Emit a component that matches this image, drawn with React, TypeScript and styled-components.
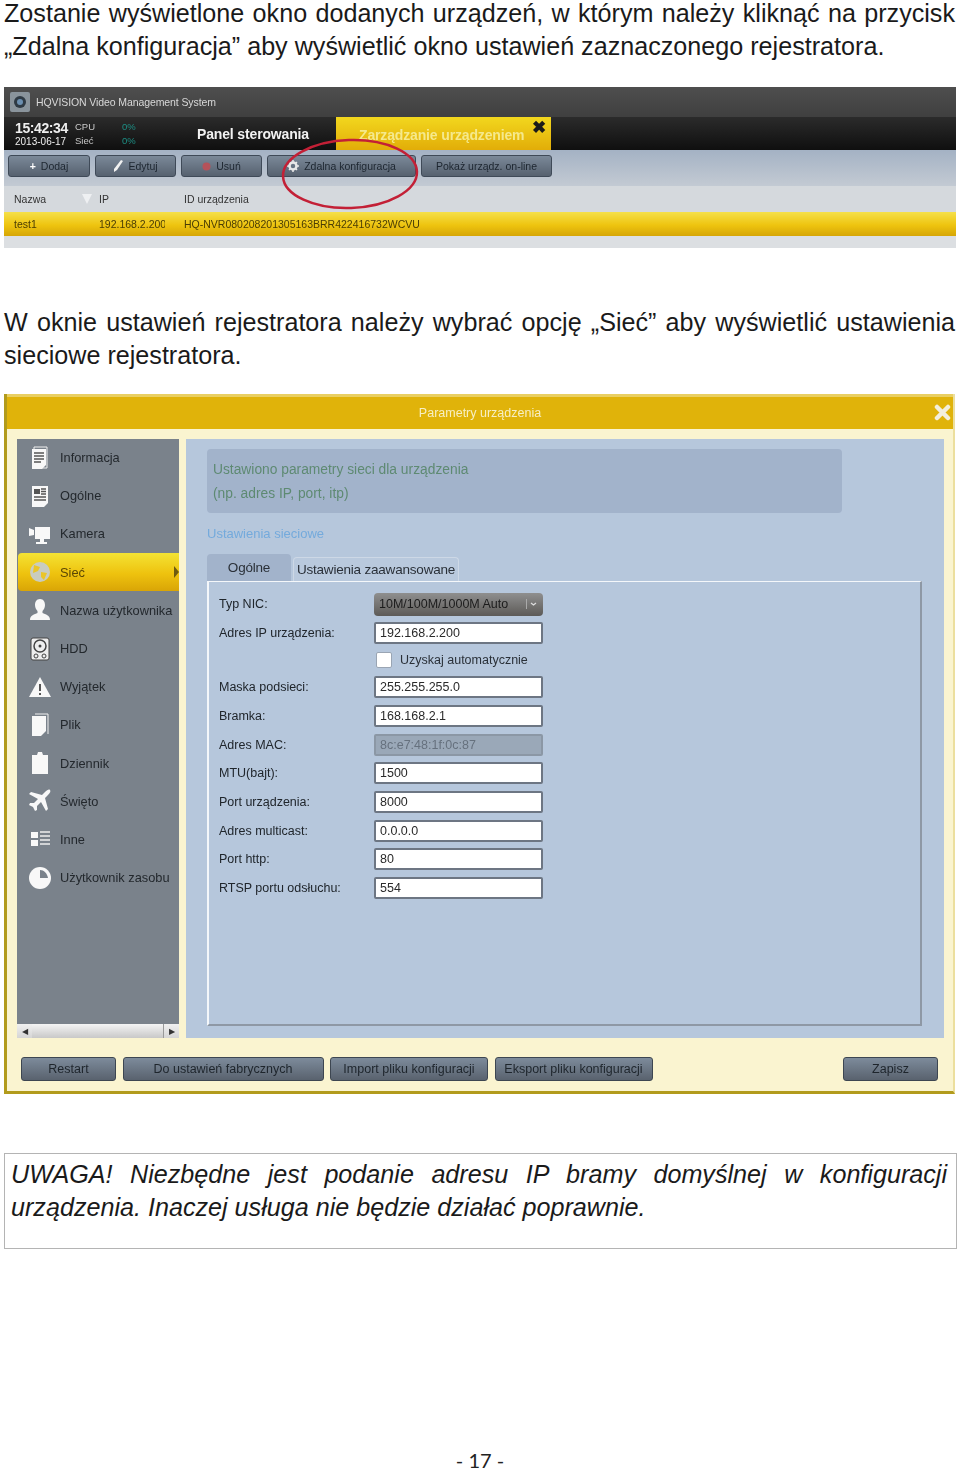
import styled, { createGlobalStyle } from 'styled-components';
import { ReactNode } from 'react';

const GlobalStyle = createGlobalStyle`
    html, body {
        margin: 0;
        padding: 0;
        background: #fff;
    }
    body {
        font-family: "Liberation Sans", Arial, sans-serif;
        color: #111;
    }
`;

const Page = styled.div`
    width: 960px;
    height: 1471px;
    overflow: hidden;
    padding: 0 4px;
    box-sizing: border-box;
`;

const Para = styled.p<{ $top: number }>`
    margin: ${p => p.$top}px 0 0;
    width: 951px;
    font-size: 25.15px;
    line-height: 33px;
    text-align: justify;
    color: #1a1a1a;
`;

/* ---------- device list screenshot ---------- */

const Shot = styled.div<{ $top: number; $height: number }>`
    position: relative;
    margin-top: ${p => p.$top}px;
    height: ${p => p.$height}px;
    filter: blur(0.35px);
    font-family: "Liberation Sans", Arial, sans-serif;
`;

const ListShot = styled(Shot)`
    width: 952px;
    display: flex;
    flex-direction: column;
    background: #dcdfe2;
`;

const TitleBar = styled.div`
    height: 30px;
    flex: none;
    display: flex;
    align-items: center;
    gap: 3px;
    padding-left: 4px;
    background: linear-gradient(#4e4e4e, #3f3f3f);
    color: #d8d8d8;
    font-size: 10.5px;
    letter-spacing: -0.1px;
`;

const NavBar = styled.div`
    height: 33px;
    flex: none;
    display: flex;
    align-items: stretch;
    background: linear-gradient(#2b2b2b, #0f0f0f);
    padding-left: 11px;
`;

const Clock = styled.div`
    width: 60px;
    display: flex;
    flex-direction: column;
    justify-content: center;
    color: #eee;
    font-size: 10px;
    b {
        font-size: 14px;
        line-height: 15px;
        letter-spacing: -0.4px;
    }
`;

const Stats = styled.div`
    width: 47px;
    display: flex;
    flex-direction: column;
    justify-content: center;
    color: #c8c8c8;
    font-size: 9.5px;
    line-height: 14px;
`;

const StatValues = styled(Stats)`
    width: 75px;
    color: #1d8f85;
`;

const NavTab = styled.div<{ $active?: boolean }>`
    display: flex;
    align-items: center;
    width: ${p => (p.$active ? '215px' : '139px')};
    padding-left: ${p => (p.$active ? '23px' : '0')};
    padding-top: ${p => (p.$active ? '3px' : '0')};
    box-sizing: border-box;
    position: relative;
    font-weight: bold;
    font-size: 14px;
    letter-spacing: -0.15px;
    color: ${p => (p.$active ? '#f5e98c' : '#f2f2f2')};
    background: ${p => (p.$active ? 'linear-gradient(#f2d71e, #e2ad08)' : 'none')};
`;

const TabClose = styled.span`
    position: absolute;
    right: 5px;
    top: 2px;
    color: #1a1a1a;
    font-size: 17px;
    line-height: 17px;
`;

const Toolbar = styled.div`
    height: 36px;
    flex: none;
    box-sizing: border-box;
    display: flex;
    gap: 5px;
    padding: 5px 0 0 4px;
    background: linear-gradient(#a4b2c4, #c3cad3);
`;

const ToolButton = styled.div<{ $width: number }>`
    width: ${p => p.$width}px;
    height: 22px;
    display: flex;
    align-items: center;
    justify-content: center;
    gap: 5px;
    box-sizing: border-box;
    border-radius: 3px;
    border: 1px solid #3f4a58;
    background: linear-gradient(#7b8999, #56616f);
    color: #1d2630;
    font-size: 10.5px;
`;

const TableHead = styled.div`
    height: 26px;
    flex: none;
    display: flex;
    align-items: center;
    background: #d5d9dd;
    color: #333;
    font-size: 10.5px;
`;

const TableRow = styled.div`
    height: 24px;
    flex: none;
    display: flex;
    align-items: center;
    background: linear-gradient(#f5e04a, #eec40f 55%, #d6a606);
    color: #4a3d05;
    font-size: 10.5px;
`;

const Cell = styled.div<{ $width: number; $inset?: number; $after?: number }>`
    width: ${p => p.$width}px;
    padding-left: ${p => p.$inset ?? 0}px;
    margin-right: ${p => p.$after ?? 0}px;
    box-sizing: border-box;
    white-space: nowrap;
    overflow: hidden;
    flex: none;
    position: relative;
`;

const SortMark = styled.span`
    position: absolute;
    right: 7px;
    top: 1px;
    width: 0;
    height: 0;
    border-left: 5px solid transparent;
    border-right: 5px solid transparent;
    border-top: 10px solid #eef0f2;
`;

const Marker = styled.svg`
    position: absolute;
    left: 273px;
    top: 48px;
    width: 146px;
    height: 78px;
`;

/* ---------- settings window screenshot ---------- */

const SettingsShot = styled(Shot)`
    width: 951px;
    box-sizing: border-box;
    display: flex;
    flex-direction: column;
    background: #faf4d0;
    border-left: 3px solid #b29b1c;
    border-right: 2px solid #ecdf9e;
    border-bottom: 3px solid #b29b1c;
`;

const WindowTitle = styled.div`
    height: 35px;
    flex: none;
    position: relative;
    display: flex;
    align-items: center;
    justify-content: center;
    background: #e0b30a;
    border-top: 3px solid #e9cf63;
    box-sizing: border-box;
    color: #f7efc4;
    font-size: 12.500px;
`;

const WindowClose = styled.svg`
    position: absolute;
    right: 2px;
    top: 7px;
    width: 17px;
    height: 17px;
`;

const WindowBody = styled.div`
    height: 599px;
    flex: none;
    margin-top: 10px;
    display: flex;
    gap: 7px;
    padding-left: 10px;
`;

const Sidebar = styled.div`
    width: 162px;
    flex: none;
    display: flex;
    flex-direction: column;
    background: #7a828b;
`;

const SideList = styled.div`
    flex: 1;
    margin-top: -0.5px;
`;

const SideItem = styled.div<{ $active?: boolean }>`
    height: 38.2px;
    display: flex;
    align-items: center;
    gap: 8px;
    padding-left: 11px;
    box-sizing: border-box;
    position: relative;
    color: ${p => (p.$active ? '#5a4605' : '#23282d')};
    font-size: 12.8px;
    white-space: nowrap;
    ${p => p.$active && `
        background: linear-gradient(#f4e334, #eec20e 55%, #d9a506);
        border-radius: 4px 0 0 4px;
        margin-left: 1px;
        padding-left: 10px;
    `}
`;

const SideArrow = styled.span`
    position: absolute;
    right: 0;
    top: 13px;
    width: 0;
    height: 0;
    border-top: 6px solid transparent;
    border-bottom: 6px solid transparent;
    border-left: 5px solid #6e5a10;
`;

const Scroll = styled.div`
    height: 14px;
    flex: none;
    display: flex;
    background: linear-gradient(#e8e8e8, #bcbcbc);
`;

const ScrollEnd = styled.div`
    width: 15px;
    display: flex;
    align-items: center;
    justify-content: center;
    background: linear-gradient(#f0f0f0, #d5d5d5);
    color: #333;
    font-size: 8px;
`;

const ScrollThumb = styled.div`
    flex: 1;
    background: linear-gradient(#f4f4f4, #c8c8c8);
    border-right: 1px solid #999;
`;

const Content = styled.div`
    width: 758px;
    flex: none;
    box-sizing: border-box;
    padding: 10px 23px 12px 21px;
    display: flex;
    flex-direction: column;
    background: #b6c7dc;
`;

const InfoBox = styled.div`
    width: 635px;
    height: 64px;
    flex: none;
    box-sizing: border-box;
    padding: 9px 6px;
    border-radius: 4px;
    background: #a2b3cb;
    color: #5e8a72;
    font-size: 13.8px;
    line-height: 24px;
`;

const SectionTitle = styled.div`
    margin-top: 13px;
    height: 16px;
    flex: none;
    color: #74aadc;
    font-size: 13px;
    line-height: 16px;
`;

const Tabs = styled.div`
    margin-top: 12px;
    height: 27px;
    flex: none;
    display: flex;
    align-items: flex-end;
    gap: 2px;
`;

const Tab = styled.div<{ $active?: boolean; $width: number }>`
    width: ${p => p.$width}px;
    height: ${p => (p.$active ? 27 : 24)}px;
    box-sizing: border-box;
    display: flex;
    align-items: center;
    justify-content: center;
    border-radius: 4px 4px 0 0;
    background: ${p => (p.$active ? '#a2b3cb' : '#b9c9dd')};
    border: ${p => (p.$active ? 'none' : '1px solid #cdd8e6')};
    border-bottom: none;
    color: #2a3038;
    font-size: 13.500px;
    letter-spacing: -0.2px;
    white-space: nowrap;
`;

const FormPanel = styled.div`
    flex: none;
    width: 715px;
    height: 445px;
    box-sizing: border-box;
    border-top: 1px solid #f4f7fa;
    border-left: 2px solid #f4f7fa;
    border-right: 2px solid #8e98a5;
    border-bottom: 2px solid #8e98a5;
    padding: 8px 0 0 10px;
    display: flex;
    flex-direction: column;
`;

const FormRow = styled.div<{ $height?: number }>`
    height: ${p => p.$height ?? 28.7}px;
    flex: none;
    display: grid;
    grid-template-columns: 155px 169px;
    align-items: center;
`;

const FieldLabel = styled.div`
    color: #20262c;
    font-size: 12.5px;
    white-space: nowrap;
`;

const TextField = styled.div<{ $disabled?: boolean }>`
    height: 22px;
    box-sizing: border-box;
    display: flex;
    align-items: center;
    padding-left: 4px;
    border-radius: 2px;
    border: 2px solid ${p => (p.$disabled ? '#8b97a5' : '#6d7683')};
    background: ${p => (p.$disabled ? '#9aa8b8' : '#fff')};
    color: ${p => (p.$disabled ? '#66717e' : '#2a2a2a')};
    font-size: 12.5px;
`;

const SelectField = styled.div`
    height: 23px;
    box-sizing: border-box;
    display: flex;
    align-items: center;
    justify-content: space-between;
    padding: 0 5px;
    border-radius: 4px;
    background: linear-gradient(#8f8f8f, #5c5a57);
    color: #1c1c1c;
    font-size: 12.5px;
    svg {
        flex: none;
    }
`;

const CheckLine = styled.div`
    grid-column: 2;
    display: flex;
    align-items: center;
    gap: 8px;
    padding-left: 2px;
    color: #2a3038;
    font-size: 12.5px;
    white-space: nowrap;
`;

const CheckBox = styled.span`
    width: 16px;
    height: 16px;
    border-radius: 2px;
    background: #fff;
    border: 1px solid #9aa5b3;
    box-sizing: border-box;
`;

const ActionBar = styled.div`
    margin-top: 19px;
    display: flex;
    gap: 6.5px;
    padding-left: 14px;
`;

const ActionButton = styled.div<{ $width: number; $push?: number }>`
    width: ${p => p.$width}px;
    margin-left: ${p => p.$push ?? 0}px;
    height: 24px;
    box-sizing: border-box;
    display: flex;
    align-items: center;
    justify-content: center;
    border-radius: 3px;
    border: 1px solid #3d4651;
    background: linear-gradient(#7d8b9b, #59626e);
    color: #1e252c;
    font-size: 12.5px;
    white-space: nowrap;
`;

/* ---------- note + footer ---------- */

const NoteBox = styled.div`
    margin-top: 59px;
    width: 953px;
    height: 96px;
    box-sizing: border-box;
    border: 1px solid #b4b4b4;
    padding: 4px 9px 0 6px;
    font-size: 25.15px;
    line-height: 33px;
    font-style: italic;
    text-align: justify;
    color: #1a1a1a;
`;

const PageNumber = styled.div`
    margin-top: 199px;
    text-align: center;
    font-family: Lato, "Liberation Sans", sans-serif;
    font-size: 20px;
    line-height: 24px;
    color: #222;
`;

/* ---------- icons ---------- */

const SvgBox = ({ children, size = 24 }: { children: ReactNode; size?: number }) => (
    <svg width={size} height={size} viewBox="0 0 24 24" fill="#f8f8f8" style={{ flex: 'none' }}>{children}</svg>
);

const sideIcons: Record<string, ReactNode> = {
    doc: <><path d="M6 1h13v21H6z" fill="none" stroke="#f0f0f0" /><path d="M4 3h14v16l-4 4H4z" /><path d="M6 7h10M6 10h10M6 13h10M6 16h7" stroke="#555" strokeWidth="1.3" /></>,
    general: <><path d="M4 2h16v17l-4 4H4z" /><path d="M6 5h6v5H6z" fill="#555" /><path d="M13 5h5M13 7.5h5M13 10h5M6 13h12M6 16h12" stroke="#555" strokeWidth="1.3" /></>,
    camera: <><path d="M7 5h15v12h-6v3h3v2H8v-2h4v-3H7z" /><path d="M1 6l5 2v5l-5 1z" /></>,
    net: <><circle cx="12" cy="12" r="10" fill="#c9ccc0" /><path d="M6 5l6 2-2 4-5 2zM13 12l6 1-3 7-3-3z" fill="#eac52a" /></>,
    user: <path d="M12 1c3.500 0 5 3 5 6 0 3-1.500 5-2.500 6v2c3 1.500 7.500 2 7.500 7H2c0-5 4.500-5.500 7.500-7v-2C8.500 12 7 10 7 7c0-3 1.500-6 5-6z" />,
    hdd: <><rect x="3" y="1" width="18" height="22" rx="2" fill="#eee" stroke="#444" /><circle cx="12" cy="9" r="6" fill="none" stroke="#444" strokeWidth="1.5" /><circle cx="12" cy="9" r="1.500" fill="#444" /><circle cx="8" cy="19" r="2" fill="none" stroke="#444" /><circle cx="16" cy="19" r="2" fill="none" stroke="#444" /></>,
    warn: <><path d="M12 2l11 20H1z" /><path d="M12 9v7M12 18v2" stroke="#555" strokeWidth="2" /></>,
    file: <><path d="M7 1h13v20" fill="none" stroke="#f0f0f0" /><path d="M4 3h14v15l-5 5H4z" /></>,
    log: <path d="M4 4h5l1-3h4l1 3h5v19H4z" />,
    plane: <path d="M22 1c1 1 0 3-2 5l-3 3 3 11-2 2-5-9-4 4v4l-2 1-2-4-4-2 1-2h4l4-4-9-5 2-2 11 3 3-3c2-2 4-3 5-2z" />,
    other: <><path d="M3 5h7v6H3zM3 13h7v6H3z" /><path d="M12 5h10M12 9h10M12 13h10M12 17h10" stroke="#eee" strokeWidth="1.300" /></>,
    pie: <><circle cx="12" cy="12" r="11" /><path d="M12 4c4 0 7 3 8 8h-8z" fill="#7a828b" /></>,
};

const menu = [
    { icon: 'doc', label: 'Informacja' },
    { icon: 'general', label: 'Ogólne' },
    { icon: 'camera', label: 'Kamera' },
    { icon: 'net', label: 'Sieć', active: true },
    { icon: 'user', label: 'Nazwa użytkownika' },
    { icon: 'hdd', label: 'HDD' },
    { icon: 'warn', label: 'Wyjątek' },
    { icon: 'file', label: 'Plik' },
    { icon: 'log', label: 'Dziennik' },
    { icon: 'plane', label: 'Święto' },
    { icon: 'other', label: 'Inne' },
    { icon: 'pie', label: 'Użytkownik zasobu' },
];

const fieldsAfterCheck = [
    { label: 'Maska podsieci:', value: '255.255.255.0' },
    { label: 'Bramka:', value: '168.168.2.1' },
    { label: 'Adres MAC:', value: '8c:e7:48:1f:0c:87', disabled: true },
    { label: 'MTU(bajt):', value: '1500' },
    { label: 'Port urządzenia:', value: '8000' },
    { label: 'Adres multicast:', value: '0.0.0.0' },
    { label: 'Port http:', value: '80' },
    { label: 'RTSP portu odsłuchu:', value: '554' },
];

const App = () => (
    <Page>
        <GlobalStyle />
        <Para $top={-3}>
            Zostanie wyświetlone okno dodanych urządzeń, w którym należy kliknąć na przycisk „Zdalna konfiguracja” aby wyświetlić okno ustawień zaznaczonego rejestratora.
        </Para>

        <ListShot $top={24} $height={161}>
            <TitleBar>
                <svg width="25" height="24" viewBox="0 0 25 24" style={{ flex: 'none' }}>
                    <rect x="2" y="2" width="20" height="20" rx="2" fill="#8a949c" />
                    <circle cx="12" cy="12" r="6" fill="#2f3a44" />
                    <circle cx="12" cy="12" r="3" fill="#6c8fb0" />
                </svg>
                HQVISION Video Management System
            </TitleBar>
            <NavBar>
                <Clock><b>15:42:34</b>2013-06-17</Clock>
                <Stats><span>CPU</span><span>Sieć</span></Stats>
                <StatValues><span>0%</span><span>0%</span></StatValues>
                <NavTab>Panel sterowania</NavTab>
                <NavTab $active>
                    Zarządzanie urządzeniem
                    <TabClose>✖</TabClose>
                </NavTab>
            </NavBar>
            <Toolbar>
                <ToolButton $width={82}><b style={{ color: '#fff' }}>+</b>Dodaj</ToolButton>
                <ToolButton $width={81}>
                    <svg width="10" height="12" viewBox="0 0 10 12"><path d="M8 0l2 1-6 9-3 2 0-3z" fill="#f2f2f2" /></svg>
                    Edytuj
                </ToolButton>
                <ToolButton $width={81}>
                    <svg width="9" height="9" viewBox="0 0 9 9"><circle cx="4.500" cy="4.500" r="4" fill="#b5525a" /></svg>
                    Usuń
                </ToolButton>
                <ToolButton $width={149}>
                    <svg width="12" height="12" viewBox="0 0 12 12">
                        <circle cx="6" cy="6" r="3.500" fill="none" stroke="#e8e8e8" strokeWidth="2.500" />
                        <path d="M6 0v2M6 10v2M0 6h2M10 6h2M2 2l1.500 1.500M8.500 8.500L10 10M2 10l1.500-1.500M8.500 3.500L10 2" stroke="#e8e8e8" strokeWidth="1.500" />
                    </svg>
                    Zdalna konfiguracja
                </ToolButton>
                <ToolButton $width={131}>Pokaż urządz. on-line</ToolButton>
            </Toolbar>
            <TableHead>
                <Cell $width={95} $inset={10}>Nazwa<SortMark /></Cell>
                <Cell $width={85}>IP</Cell>
                <Cell $width={400}>ID urządzenia</Cell>
            </TableHead>
            <TableRow>
                <Cell $width={95} $inset={10}>test1</Cell>
                <Cell $width={66} $after={19}>192.168.2.200</Cell>
                <Cell $width={400}>HQ-NVR080208201305163BRR422416732WCVU</Cell>
            </TableRow>
            <Marker viewBox="0 0 146 78">
                <ellipse cx="73" cy="39" rx="67" ry="34" fill="none" stroke="#c32036" strokeWidth="2.500" transform="rotate(-2 73 39)" />
            </Marker>
        </ListShot>

        <Para $top={58}>
            W oknie ustawień rejestratora należy wybrać opcję „Sieć” aby wyświetlić ustawienia sieciowe rejestratora.
        </Para>

        <SettingsShot $top={22} $height={700}>
            <WindowTitle>
                Parametry urządzenia
                <WindowClose viewBox="0 0 17 17">
                    <path d="M3 3l11 11M14 3L3 14" stroke="#f3efdc" strokeWidth="4.500" strokeLinecap="round" />
                </WindowClose>
            </WindowTitle>
            <WindowBody>
                <Sidebar>
                    <SideList>
                        {menu.map(item => (
                            <SideItem key={item.label} $active={item.active}>
                                <SvgBox>{sideIcons[item.icon]}</SvgBox>
                                {item.label}
                                {item.active && <SideArrow />}
                            </SideItem>
                        ))}
                    </SideList>
                    <Scroll>
                        <ScrollEnd>◀</ScrollEnd>
                        <ScrollThumb />
                        <ScrollEnd>▶</ScrollEnd>
                    </Scroll>
                </Sidebar>
                <Content>
                    <InfoBox>
                        Ustawiono parametry sieci dla urządzenia<br />
                        (np. adres IP, port, itp)
                    </InfoBox>
                    <SectionTitle>Ustawienia sieciowe</SectionTitle>
                    <Tabs>
                        <Tab $active $width={84}>Ogólne</Tab>
                        <Tab $width={166}>Ustawienia zaawansowane</Tab>
                    </Tabs>
                    <FormPanel>
                        <FormRow>
                            <FieldLabel>Typ NIC:</FieldLabel>
                            <SelectField>
                                10M/100M/1000M Auto
                                <svg width="12" height="10" viewBox="0 0 12 10">
                                    <path d="M.5 0v10" stroke="#aaa" />
                                    <path d="M5 4l2.500 2L10 4" fill="none" stroke="#ddd" strokeWidth="1.300" />
                                </svg>
                            </SelectField>
                        </FormRow>
                        <FormRow>
                            <FieldLabel>Adres IP urządzenia:</FieldLabel>
                            <TextField>192.168.2.200</TextField>
                        </FormRow>
                        <FormRow $height={25.5}>
                            <CheckLine><CheckBox />Uzyskaj automatycznie</CheckLine>
                        </FormRow>
                        {fieldsAfterCheck.map(field => (
                            <FormRow key={field.label}>
                                <FieldLabel>{field.label}</FieldLabel>
                                <TextField $disabled={field.disabled}>{field.value}</TextField>
                            </FormRow>
                        ))}
                    </FormPanel>
                </Content>
            </WindowBody>
            <ActionBar>
                <ActionButton $width={95}>Restart</ActionButton>
                <ActionButton $width={201}>Do ustawień fabrycznych</ActionButton>
                <ActionButton $width={158}>Import pliku konfiguracji</ActionButton>
                <ActionButton $width={158}>Eksport pliku konfiguracji</ActionButton>
                <ActionButton $width={95} $push={184}>Zapisz</ActionButton>
            </ActionBar>
        </SettingsShot>

        <NoteBox>
            UWAGA! Niezbędne jest podanie adresu IP bramy domyślnej w konfiguracji urządzenia. Inaczej usługa nie będzie działać poprawnie.
        </NoteBox>

        <PageNumber>- 17 -</PageNumber>
    </Page>
);

export default App;
